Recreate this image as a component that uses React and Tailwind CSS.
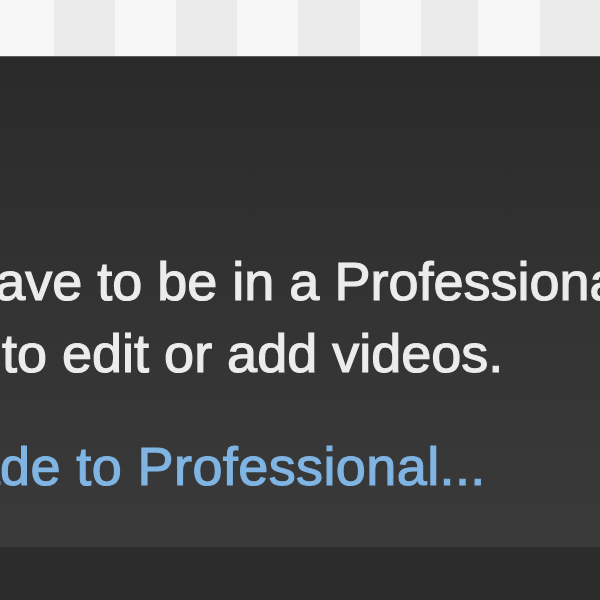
export default function App() {
  const stripes = [
    ["w-[54px]", "bg-[#f7f7f7]"],
    ["w-[61px]", "bg-[#ebebeb]"],
    ["w-[61px]", "bg-[#f7f7f7]"],
    ["w-[61px]", "bg-[#ebebeb]"],
    ["w-[61px]", "bg-[#f7f7f7]"],
    ["w-[62px]", "bg-[#ebebeb]"],
    ["w-[61px]", "bg-[#f7f7f7]"],
    ["w-[57px]", "bg-[#ebebeb]"],
    ["w-[62px]", "bg-[#f7f7f7]"],
    ["w-[60px]", "bg-[#ebebeb]"],
  ];
  return (
    <div className="w-[600px] h-[600px] overflow-hidden flex flex-col bg-[#2d2d2d] font-['Liberation_Sans',Arial,sans-serif]">
      <div className="h-[56px] flex shrink-0">
        {stripes.map(([w, c], i) => (
          <div key={i} className={`${w} ${c} h-full shrink-0`} />
        ))}
      </div>
      <div className="h-px bg-[#5c5c5c] shrink-0" />
      <div className="h-[490px] shrink-0 flex flex-col bg-gradient-to-b from-[#2a2a2a] via-[#333333] to-[#3a3a3a] pt-[188px] overflow-hidden">
        <div className="text-[54px] leading-[72px] text-[#ececec] whitespace-nowrap [-webkit-text-stroke:1.2px_#ececec] blur-[0.4px]">
          <div className="ml-[-141px]">You have to be in a Professional workspace</div>
          <div className="ml-[2px]">to edit or add videos.</div>
        </div>
        <div className="mt-[41px] text-[54px] leading-[72px] text-[#7fb4e3] whitespace-nowrap tracking-[0.4px] [-webkit-text-stroke:1.2px_#7fb4e3] blur-[0.4px]">
          <span className="ml-[-149px] block">Upgrade to Professional...</span>
        </div>
      </div>
      <div className="flex-1 bg-[#2c2c2c]" />
    </div>
  );
}
